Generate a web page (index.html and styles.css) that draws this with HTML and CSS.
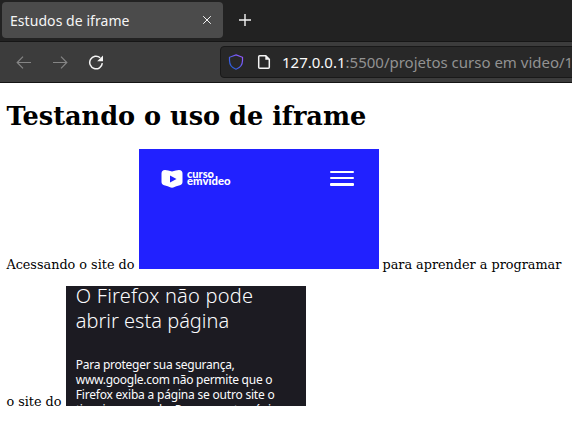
FILE: index.html
```html
<!DOCTYPE html>
<html lang="pt-br">
<head>
<meta charset="UTF-8">
<title>Estudos de iframe</title>
<link rel="stylesheet" href="styles.css">
</head>
<body>
<header class="browser">
  <div class="tabs">
    <div class="tab">
      <span class="tab-title">Estudos de iframe</span>
      <svg class="close" width="10" height="10" viewBox="0 0 10 10"><path d="M1.2 1.2 8.8 8.8M8.8 1.2 1.2 8.8"/></svg>
    </div>
    <svg class="plus" width="14" height="14" viewBox="0 0 14 14"><path d="M7 1V13M1 7H13"/></svg>
  </div>
  <nav class="toolbar">
    <svg class="nav-icon dim" width="16" height="16" viewBox="0 0 16 16"><path d="M15 8.5H1.5M7 2.7 1.2 8.5 7 14.3"/></svg>
    <svg class="nav-icon dim" width="16" height="16" viewBox="0 0 16 16"><path d="M1 8.5H14.5M9 2.7 14.8 8.5 9 14.3"/></svg>
    <svg class="nav-icon" width="16" height="16" viewBox="0 0 16 16"><path class="arc" d="M12.2 3.8A6.3 6.3 0 1 0 14.3 9.1"/><path class="head" d="M15 1.5V7.3H9.2Z"/></svg>
    <div class="url">
      <svg class="shield" width="16" height="16" viewBox="0 0 16 16">
        <defs><linearGradient id="g" x1="0" y1="1" x2="1" y2="0"><stop offset=".2" stop-color="#2f5fdc"/><stop offset=".9" stop-color="#9059ff"/></linearGradient></defs>
        <path d="M8 .9 14.5 3.3V6.5C14.5 10.5 12 13.8 8 15.3 4 13.8 1.5 10.5 1.5 6.5V3.3Z" stroke="url(#g)"/>
      </svg>
      <svg class="page-icon" width="14" height="16" viewBox="0 0 14 16"><path d="M2.7 1.8H8.8L12.3 5.3V13.2Q12.3 14.2 11.3 14.2H2.7Q1.7 14.2 1.7 13.2V2.8Q1.7 1.8 2.7 1.8Z"/><path class="fold" d="M8.3 1.3V5.8H12.8Z"/></svg>
      <span class="address"><b>127.0.0.1</b>:5500/projetos curso em video/1-</span>
    </div>
  </nav>
</header>
<main>
  <h1>Testando o uso de iframe</h1>
  <p class="row">
    <span class="before">Acessando o site do</span>
    <span class="frame course">
      <svg class="logo" width="70" height="20" viewBox="0 0 70 20">
        <path class="mark" d="M.5 4.5Q.5 1 4 1 7 1 11 2.6 15 1 18 1 21.5 1 21.5 4.5V13Q21.5 15.8 18 16.5 14.8 17 13.5 18 11 19.5 8.5 18 7.2 17 4 16.5.5 15.8.5 13Z"/>
        <path class="play" d="M9 6.5 15.5 10 9 13.5Z"/>
        <text x="26" y="8.8" textLength="27" lengthAdjust="spacingAndGlyphs">curso</text>
        <text x="26" y="15.6" textLength="43.5" lengthAdjust="spacingAndGlyphs">emvideo</text>
      </svg>
      <span class="menu"><i></i><i></i><i></i></span>
    </span>
    <span class="after">para aprender a programar</span>
  </p>
  <p class="row">
    <span class="before">o site do</span>
    <span class="frame blocked">
      <span class="heading"><span class="t1">O Firefox não pode</span><span class="t2">abrir esta página</span></span>
      <span class="message"><span class="m1">Para proteger sua segurança,</span><span class="m2">www.google.com não permite que o</span><span class="m3">Firefox exiba a página se outro site o</span><span class="m4">tiver incorporado. Para ver esta página,</span></span>
    </span>
  </p>
</main>
</body>
</html>
```
FILE: styles.css
```css
* { box-sizing: border-box; }
html { overflow: hidden; }
body { margin: 0; width: 572px; height: 436px; overflow: hidden; background: #fff; color: #000; font-family: "DejaVu Serif", serif; font-size: 12.8px; }
svg { flex: none; fill: none; stroke: #f4f4f4; }
.browser { font-family: "Noto Sans", sans-serif; white-space: nowrap; }
.tabs { display: flex; align-items: center; height: 42px; padding: 0 2px 1px; background: #222; border-bottom: 1px solid #161616; }
.tab { display: flex; align-items: center; justify-content: space-between; width: 221px; height: 36px; padding: 0 11px 0 8px; background: #4b4b4b; border-radius: 4px; color: #f5f5f5; }
.tab-title { font-size: 14px; letter-spacing: .06px; }
.plus { margin-left: 15px; stroke-width: 1.4; }
.toolbar { display: flex; align-items: center; height: 41px; padding-left: 16px; background: #3c3c3c; border-bottom: 1px solid #151515; }
.nav-icon { margin-right: 20px; stroke-width: 1.2; }
.dim { stroke: #858585; }
.arc { stroke-width: 1.5; }
.head { fill: #f4f4f4; stroke: none; }
.url { display: flex; align-items: center; width: 370px; height: 32px; margin-left: 96px; padding-left: 7px; background: #282828; border: 1px solid #191919; border-radius: 4px; flex: none; }
.shield { stroke-width: 1.2; }
.page-icon { margin-left: 13px; stroke-width: 1.5; }
.fold { fill: #f4f4f4; stroke: none; }
.address { margin-left: 11px; color: #929292; font-size: 15px; }
.address b { color: #fafafa; font-weight: 400; }
main { padding: 17px 6.4px 0; }
h1 { margin: 0 0 17px; font-size: 25.6px; line-height: 32px; white-space: nowrap; }
.row { display: flex; align-items: flex-end; margin: 0 0 17px; white-space: nowrap; }
.before, .after { line-height: 15px; margin-bottom: -3px; }
.frame { display: block; flex: none; width: 240px; height: 120px; margin: 0 4px; overflow: hidden; }
.course { display: flex; justify-content: space-between; align-items: flex-start; margin: 0 3.4px 0 4.6px; padding: 20px 25px 0 22px; background: #2121ff; }
.logo text { font-family: Lato, sans-serif; font-size: 10.5px; font-weight: 900; fill: #fff; stroke: none; }
.mark { fill: #fff; stroke: none; }
.play { fill: #2121ff; stroke: none; }
.menu { display: grid; gap: 4px; width: 24px; margin-top: 2px; }
.menu i { height: 2px; background: #fff; border-radius: 1px; }
.menu i:last-child { height: 3px; }
.blocked { padding-left: 10.2px; background: #1c1b22; color: #fbfbfe; font-family: "Noto Sans", sans-serif; }
.blocked span { display: block; }
.heading { margin-top: -3px; font-size: 20px; font-weight: 300; line-height: 25px; }
.t1 { letter-spacing: .25px; }
.message { margin-top: 24px; font-size: 12px; line-height: 15px; letter-spacing: -.26px; }
.m3 { letter-spacing: -.2px; }
```
